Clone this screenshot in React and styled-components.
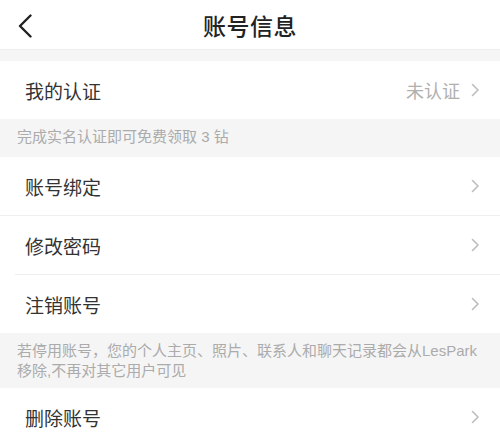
import React from "react";
import styled, { createGlobalStyle } from "styled-components";

const Global = createGlobalStyle`
  html, body { margin: 0; padding: 0; background: #f5f5f5; }
  body { font-family: "Liberation Sans", "Noto Sans CJK SC", sans-serif; }
  * { box-sizing: border-box; }
`;

const Page = styled.div`
  width: 500px;
  height: 442px;
  overflow: hidden;
  background: #f5f5f5;
  display: flex;
  flex-direction: column;
`;

const Header = styled.header`
  height: 50px;
  flex: none;
  background: #fff;
  border-bottom: 1px solid #efefef;
  position: relative;
  display: flex;
  align-items: center;
  justify-content: center;
`;

const BackButton = styled.button`
  position: absolute;
  left: 13px;
  top: 12px;
  width: 24px;
  height: 28px;
  padding: 0;
  border: 0;
  background: none;
  display: flex;
  align-items: center;
  justify-content: center;
`;

const Title = styled.h1`
  margin: 0;
  font-size: 23px;
  font-weight: 500;
  color: #222;
  letter-spacing: 0.5px;
`;

const Gap = styled.div`
  height: ${(p) => p.h}px;
  flex: none;
`;

const Group = styled.div`
  background: #fff;
  display: flex;
  flex-direction: column;
  flex: none;
`;

const Row = styled.div`
  height: 58px;
  display: flex;
  align-items: center;
  padding: 0 20px 0 25px;
  position: relative;
  ${(p) =>
    p.divider &&
    `&::after {
      content: "";
      position: absolute;
      left: ${p.inset || 0}px;
      right: 0;
      bottom: -1px;
      height: 1px;
      background: #efefef;
    }`}
  margin-bottom: ${(p) => (p.divider ? 1 : 0)}px;
`;

const Label = styled.span`
  flex: 1;
  font-size: 19px;
  color: #333;
`;

const Value = styled.span`
  font-size: 18px;
  color: #b0b0b0;
  margin-right: 11px;
`;

const Note = styled.div`
  flex: none;
  height: ${(p) => p.h}px;
  padding: ${(p) => p.pt}px 18px 0 17px;
  font-size: 15px;
  line-height: 20px;
  color: #ababab;
`;

const Chevron = () => (
  <svg width="9" height="14" viewBox="0 0 9 14" fill="none">
    <path d="M1.5 1.5L7 7L1.5 12.5" stroke="#bdbdbd" strokeWidth="1.6" strokeLinecap="round" strokeLinejoin="round" />
  </svg>
);

const BackIcon = () => (
  <svg width="16" height="24" viewBox="0 0 16 24" fill="none">
    <path d="M13.5 1.5L3 12L13.5 22.5" stroke="#222" strokeWidth="2.4" strokeLinecap="round" strokeLinejoin="round" />
  </svg>
);

export default function App() {
  return (
    <>
      <Global />
      <Page>
        <Header>
          <BackButton aria-label="返回">
            <BackIcon />
          </BackButton>
          <Title>账号信息</Title>
        </Header>
        <Gap h={11} />
        <Group>
          <Row>
            <Label>我的认证</Label>
            <Value>未认证</Value>
            <Chevron />
          </Row>
        </Group>
        <Note h={38} pt={8}>完成实名认证即可免费领取 3 钻</Note>
        <Group>
          <Row divider>
            <Label>账号绑定</Label>
            <Chevron />
          </Row>
          <Row divider inset={15}>
            <Label>修改密码</Label>
            <Chevron />
          </Row>
          <Row>
            <Label>注销账号</Label>
            <Chevron />
          </Row>
        </Group>
        <Note h={55} pt={8}>
          若停用账号，您的个人主页、照片、联系人和聊天记录都会从LesPark移除,不再对其它用户可见
        </Note>
        <Group>
          <Row>
            <Label>删除账号</Label>
            <Chevron />
          </Row>
        </Group>
      </Page>
    </>
  );
}
